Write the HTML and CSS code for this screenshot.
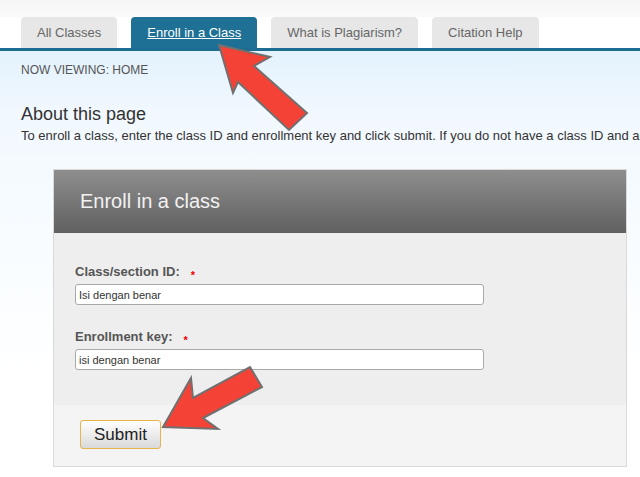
FILE: index.html
```html
<!DOCTYPE html>
<html>
<head>
<meta charset="utf-8">
<link rel="stylesheet" href="styles.css">
</head>
<body>
<div class="topstrip"></div>
<nav class="tabs">
  <a class="tab">All Classes</a>
  <a class="tab active">Enroll in a Class</a>
  <a class="tab">What is Plagiarism?</a>
  <a class="tab">Citation Help</a>
</nav>
<main class="content">
  <div class="crumb">NOW VIEWING: HOME</div>
  <h1 class="title">About this page</h1>
  <p class="intro">To enroll a class, enter the class ID and enrollment key and click submit. If you do not have a class ID and an enrollment key, please contact your instructor.</p>
  <section class="panel">
    <div class="panel-head">Enroll in a class</div>
    <div class="panel-body">
      <label class="label">Class/section ID: <span class="req">*</span></label>
      <input class="field" type="text" value="Isi dengan benar">
      <label class="label second">Enrollment key: <span class="req">*</span></label>
      <input class="field" type="text" value="isi dengan benar">
    </div>
    <div class="panel-foot">
      <button class="submit">Submit</button>
    </div>
  </section>
</main>
<svg class="arrows" width="640" height="477" viewBox="0 0 640 477">
  <polygon points="219,45 270,57 254,66 307,113 289,130 238,82 233,93" />
  <polygon points="163,427 191,378 193,398 250,367 262,387 203,418 218,429" />
</svg>
</body>
</html>
```
FILE: styles.css
```css
html, body {
  margin: 0;
  padding: 0;
}
body {
  width: 640px;
  height: 477px;
  overflow: hidden;
  position: relative;
  font-family: "Liberation Sans", Arial, sans-serif;
  background: #fff;
}
.topstrip {
  height: 17px;
  background: linear-gradient(#f6f6f6, #fafafa);
}
.tabs {
  display: flex;
  gap: 14px;
  padding-left: 21px;
  height: 31px;
  border-bottom: 3px solid #1c6d91;
  background: #fff;
}
.tab {
  display: block;
  padding: 0 16px;
  height: 31px;
  line-height: 32px;
  font-size: 13px;
  color: #666;
  background: #e7e7e7;
  border-radius: 4px 4px 0 0;
  white-space: nowrap;
}
.tab.active {
  background: #1e7095;
  color: #fff;
  text-decoration: underline;
}
.content {
  background: linear-gradient(#e3f2fd 0, #f1f8fe 60px, #f6fbff 150px, #fff 330px);
  padding: 12px 0 11px 21px;
  height: 426px;
  box-sizing: border-box;
}
.crumb {
  font-size: 12px;
  line-height: 14px;
  color: #555;
}
.title {
  margin: 26px 0 0;
  font-size: 18px;
  font-weight: normal;
  line-height: 22px;
  color: #333;
}
.intro {
  margin: 3px 0 0;
  font-size: 13px;
  line-height: 16px;
  color: #333;
  white-space: nowrap;
  overflow: hidden;
}
.panel {
  margin: 25px 0 0 32px;
  width: 574px;
  border: 1px solid #d9d9d9;
  box-sizing: border-box;
}
.panel-head {
  height: 63px;
  background: linear-gradient(#8e8e8e, #606060);
  color: #f2f2f2;
  font-size: 20px;
  line-height: 62px;
  padding-left: 26px;
}
.panel-body {
  background: #eeeeee;
  padding: 31px 21px 35px;
  display: flex;
  flex-direction: column;
  align-items: flex-start;
}
.label {
  font-size: 13px;
  font-weight: bold;
  line-height: 15px;
  color: #555;
  margin-bottom: 5px;
  display: flex;
  align-items: flex-end;
}
.label.second {
  margin-top: 24px;
}
.req {
  color: #e00;
  font-size: 11px;
  line-height: 11px;
  margin-left: 11px;
  position: relative;
  top: 2px;
}
.field {
  width: 409px;
  height: 21px;
  box-sizing: border-box;
  border: 1px solid #a9a9a9;
  border-radius: 3px;
  background: #fff;
  font-family: "Liberation Sans", Arial, sans-serif;
  font-size: 11px;
  color: #333;
  padding: 0 3px;
  margin: 0;
}
.panel-foot {
  background: #f4f4f4;
  height: 61px;
  padding: 15px 0 0 26px;
  box-sizing: border-box;
}
.submit {
  width: 81px;
  height: 29px;
  border: 1px solid #e6b54a;
  border-radius: 3px;
  background: linear-gradient(#ffffff, #d9d9d9);
  font-family: "Liberation Sans", Arial, sans-serif;
  font-size: 17px;
  color: #222;
  padding: 0;
}
.arrows {
  position: absolute;
  left: 0;
  top: 0;
  pointer-events: none;
}
.arrows polygon {
  fill: #f44336;
  stroke: #707070;
  stroke-width: 2;
  stroke-linejoin: miter;
}
```
